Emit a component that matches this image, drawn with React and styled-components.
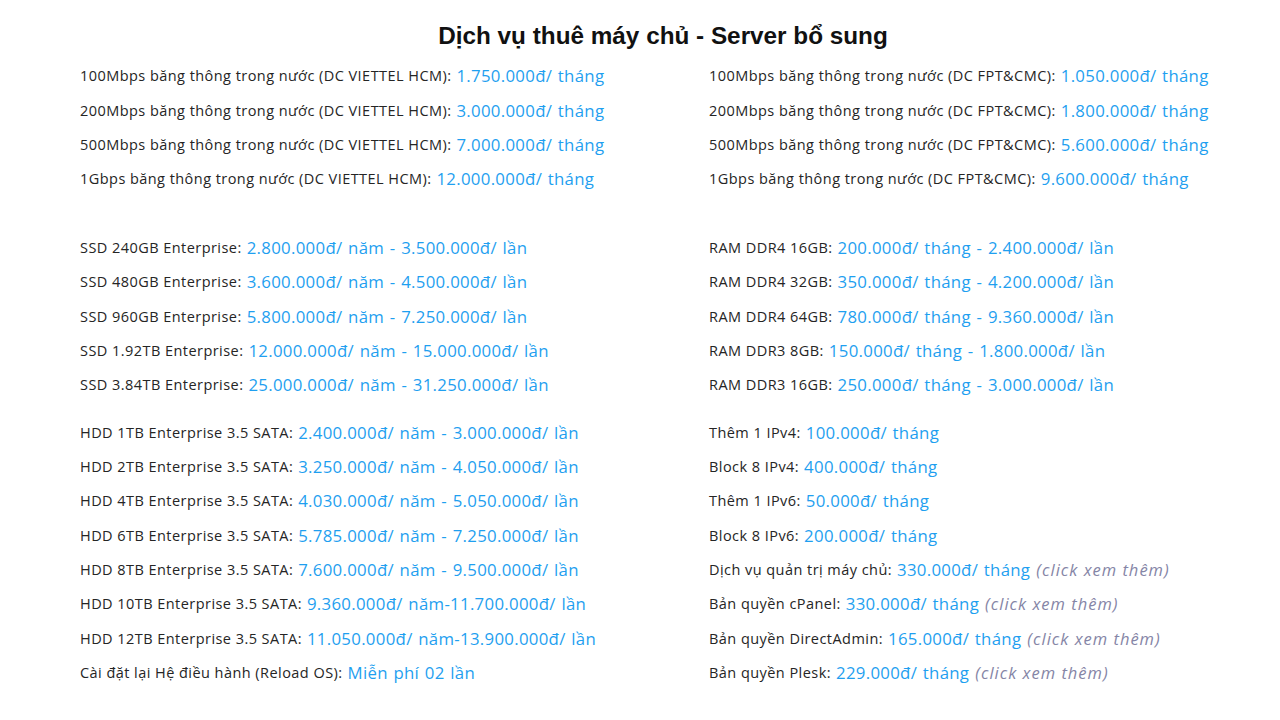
import React from "react";
import styled, { createGlobalStyle } from "styled-components";

const Global = createGlobalStyle`
  html, body { margin: 0; padding: 0; background: #ffffff; }
  body { font-family: "Open Sans", "Noto Sans", sans-serif; }
`;

const Page = styled.div`
  width: 1280px;
  height: 720px;
  overflow: hidden;
  box-sizing: border-box;
  padding: 20px 0 0 80px;
`;

const Title = styled.h2`
  margin: 0 0 0 -80px;
  width: 1280px;
  box-sizing: border-box;
  padding-left: 46px;
  text-align: center;
  font-family: "Liberation Sans", Arial, sans-serif;
  font-weight: 700;
  font-size: 24.3px;
  line-height: 32px;
  color: #111;
  height: 38.8px;
`;

const Section = styled.div`
  display: grid;
  grid-template-columns: 629px 1fr;
  margin-top: ${(p) => p.$gap || 0}px;
`;

const Column = styled.div`
  display: flex;
  flex-direction: column;
`;

const Row = styled.div`
  height: 34.33px;
  display: flex;
  align-items: center;
  white-space: nowrap;
`;

const Label = styled.span`
  font-size: 14.5px;
  color: #252525;
  letter-spacing: 0.45px;
`;

const Price = styled.span`
  font-size: 16.8px;
  color: #1f9ff0;
  margin-left: 5px;
  letter-spacing: 0.3px;
  word-spacing: 1px;
`;

const Note = styled.span`
  font-size: 16.5px;
  font-style: italic;
  color: #8585a6;
  margin-left: 6px;
  letter-spacing: 1px;
`;

const sections = [
  {
    gap: 0,
    left: [
      ["100Mbps băng thông trong nước (DC VIETTEL HCM):", "1.750.000đ/ tháng"],
      ["200Mbps băng thông trong nước (DC VIETTEL HCM):", "3.000.000đ/ tháng"],
      ["500Mbps băng thông trong nước (DC VIETTEL HCM):", "7.000.000đ/ tháng"],
      ["1Gbps băng thông trong nước (DC VIETTEL HCM):", "12.000.000đ/ tháng"],
    ],
    right: [
      ["100Mbps băng thông trong nước (DC FPT&CMC):", "1.050.000đ/ tháng"],
      ["200Mbps băng thông trong nước (DC FPT&CMC):", "1.800.000đ/ tháng"],
      ["500Mbps băng thông trong nước (DC FPT&CMC):", "5.600.000đ/ tháng"],
      ["1Gbps băng thông trong nước (DC FPT&CMC):", "9.600.000đ/ tháng"],
    ],
  },
  {
    gap: 34.33,
    left: [
      ["SSD 240GB Enterprise:", "2.800.000đ/ năm - 3.500.000đ/ lần"],
      ["SSD 480GB Enterprise:", "3.600.000đ/ năm - 4.500.000đ/ lần"],
      ["SSD 960GB Enterprise:", "5.800.000đ/ năm - 7.250.000đ/ lần"],
      ["SSD 1.92TB Enterprise:", "12.000.000đ/ năm - 15.000.000đ/ lần"],
      ["SSD 3.84TB Enterprise:", "25.000.000đ/ năm - 31.250.000đ/ lần"],
    ],
    right: [
      ["RAM DDR4 16GB:", "200.000đ/ tháng - 2.400.000đ/ lần"],
      ["RAM DDR4 32GB:", "350.000đ/ tháng - 4.200.000đ/ lần"],
      ["RAM DDR4 64GB:", "780.000đ/ tháng - 9.360.000đ/ lần"],
      ["RAM DDR3 8GB:", "150.000đ/ tháng - 1.800.000đ/ lần"],
      ["RAM DDR3 16GB:", "250.000đ/ tháng - 3.000.000đ/ lần"],
    ],
  },
  {
    gap: 13,
    left: [
      ["HDD 1TB Enterprise 3.5 SATA:", "2.400.000đ/ năm - 3.000.000đ/ lần"],
      ["HDD 2TB Enterprise 3.5 SATA:", "3.250.000đ/ năm - 4.050.000đ/ lần"],
      ["HDD 4TB Enterprise 3.5 SATA:", "4.030.000đ/ năm - 5.050.000đ/ lần"],
      ["HDD 6TB Enterprise 3.5 SATA:", "5.785.000đ/ năm - 7.250.000đ/ lần"],
      ["HDD 8TB Enterprise 3.5 SATA:", "7.600.000đ/ năm - 9.500.000đ/ lần"],
      ["HDD 10TB Enterprise 3.5 SATA:", "9.360.000đ/ năm-11.700.000đ/ lần"],
      ["HDD 12TB Enterprise 3.5 SATA:", "11.050.000đ/ năm-13.900.000đ/ lần"],
      ["Cài đặt lại Hệ điều hành (Reload OS):", "Miễn phí 02 lần"],
    ],
    right: [
      ["Thêm 1 IPv4:", "100.000đ/ tháng"],
      ["Block 8 IPv4:", "400.000đ/ tháng"],
      ["Thêm 1 IPv6:", "50.000đ/ tháng"],
      ["Block 8 IPv6:", "200.000đ/ tháng"],
      ["Dịch vụ quản trị máy chủ:", "330.000đ/ tháng", true],
      ["Bản quyền cPanel:", "330.000đ/ tháng", true],
      ["Bản quyền DirectAdmin:", "165.000đ/ tháng", true],
      ["Bản quyền Plesk:", "229.000đ/ tháng", true],
    ],
  },
];

function Item({ label, price, note }) {
  return (
    <Row>
      <Label>{label}</Label>
      <Price>{price}</Price>
      {note && <Note>(click xem thêm)</Note>}
    </Row>
  );
}

export default function App() {
  return (
    <>
      <Global />
      <Page>
        <Title>Dịch vụ thuê máy chủ - Server bổ sung</Title>
        {sections.map((s, i) => (
          <Section key={i} $gap={s.gap}>
            <Column>
              {s.left.map(([l, p, n], j) => (
                <Item key={j} label={l} price={p} note={n} />
              ))}
            </Column>
            <Column>
              {s.right.map(([l, p, n], j) => (
                <Item key={j} label={l} price={p} note={n} />
              ))}
            </Column>
          </Section>
        ))}
      </Page>
    </>
  );
}
